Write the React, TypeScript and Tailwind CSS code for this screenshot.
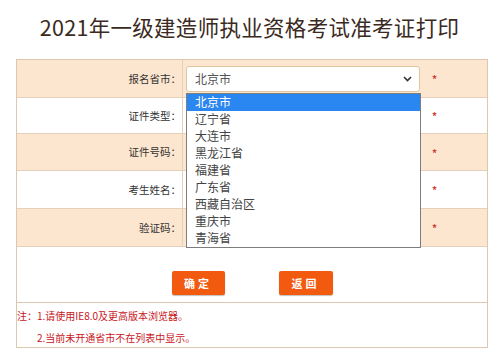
import React from 'react';

const cjk = { fontFamily: '"Noto Sans CJK SC", "Noto Sans", sans-serif' };

const provinces = ['北京市', '辽宁省', '大连市', '黑龙江省', '福建省', '广东省', '西藏自治区', '重庆市', '青海省'];

const Row: React.FC<{ label: string; peach?: boolean; h: string; children?: React.ReactNode }> = ({
  label,
  peach,
  h,
  children,
}) => (
  <div className={`flex border-b border-[#e6d0b9] ${h} ${peach ? 'bg-[#fde6cf]' : 'bg-white'}`}>
    <div className="w-[166px] shrink-0 border-r border-[#e6d0b9] flex items-center justify-end pr-[1px] text-[10.5px] text-[#333]">
      {label}
    </div>
    <div className="flex-1 flex items-center pl-[3px]">
      <div className="w-[234px] h-[26px] relative">{children}</div>
      <span className="ml-[12px] text-[10px] text-[#d43b3b] font-bold">*</span>
    </div>
  </div>
);

export default function App() {
  return (
    <div className="w-[499px] h-[352px] bg-white overflow-hidden" style={cjk}>
      {/* Title */}
      <div className="h-[59px] flex items-center justify-center pb-[6px]">
        <h1 className="text-[21.5px] leading-none text-[#3b2a22] tracking-[0.3px]">2021年一级建造师执业资格考试准考证打印</h1>
      </div>

      {/* Form table */}
      <div className="ml-4 w-[472px] border-x border-t border-[#dcc7b1]">
        <Row label="报名省市：" peach h="h-[38px]">
          <div className="absolute inset-0 bg-white border border-[#dcc79e] rounded-[3px] flex items-center justify-between pl-[8px] pr-[6px]">
            <span className="text-[12px] text-[#555]">北京市</span>
            <svg width="9" height="6" viewBox="0 0 9 6" className="mr-[1px]">
              <path d="M1 1l3.5 3.5L8 1" fill="none" stroke="#333" strokeWidth="1.6" />
            </svg>
          </div>
          {/* open dropdown list */}
          <div className="absolute left-0 top-[27px] w-[235px] bg-white border border-[#7d7d7d] z-10">
            {provinces.map((p, i) => (
              <div
                key={p}
                className={`h-[17px] flex items-center pl-[8px] text-[12px] ${
                  i === 0 ? 'bg-[#2a86f0] text-white' : 'text-[#444]'
                }`}
              >
                {p}
              </div>
            ))}
          </div>
        </Row>
        <Row label="证件类型：" h="h-[36px]" />
        <Row label="证件号码：" peach h="h-[37px]" />
        <Row label="考生姓名：" h="h-[38px]" />
        <Row label="验证码：" peach h="h-[38px]" />

        {/* Buttons */}
        <div className="h-[56px] border-b border-[#dcc7b1] flex justify-center gap-[54px] pt-[24px]">
          <button className="w-[53px] h-[24px] bg-[#f25a10] rounded-[2px] text-white text-[11px] font-bold tracking-[3px] shadow-[0_1px_1px_rgba(0,0,0,0.25)]">
            确定
          </button>
          <button className="w-[54px] h-[24px] bg-[#f25a10] rounded-[2px] text-white text-[11px] font-bold tracking-[3px] shadow-[0_1px_1px_rgba(0,0,0,0.25)]">
            返回
          </button>
        </div>

        {/* Notes */}
        <div className="h-[45px] border-b border-[#dcc7b1] text-[10px] text-[#c8161d] flex flex-col pt-[5px] gap-[6px] leading-[16px]">
          <div>注：1.请使用IE8.0及更高版本浏览器。</div>
          <div className="pl-[20px]">2.当前未开通省市不在列表中显示。</div>
        </div>
      </div>
    </div>
  );
}
